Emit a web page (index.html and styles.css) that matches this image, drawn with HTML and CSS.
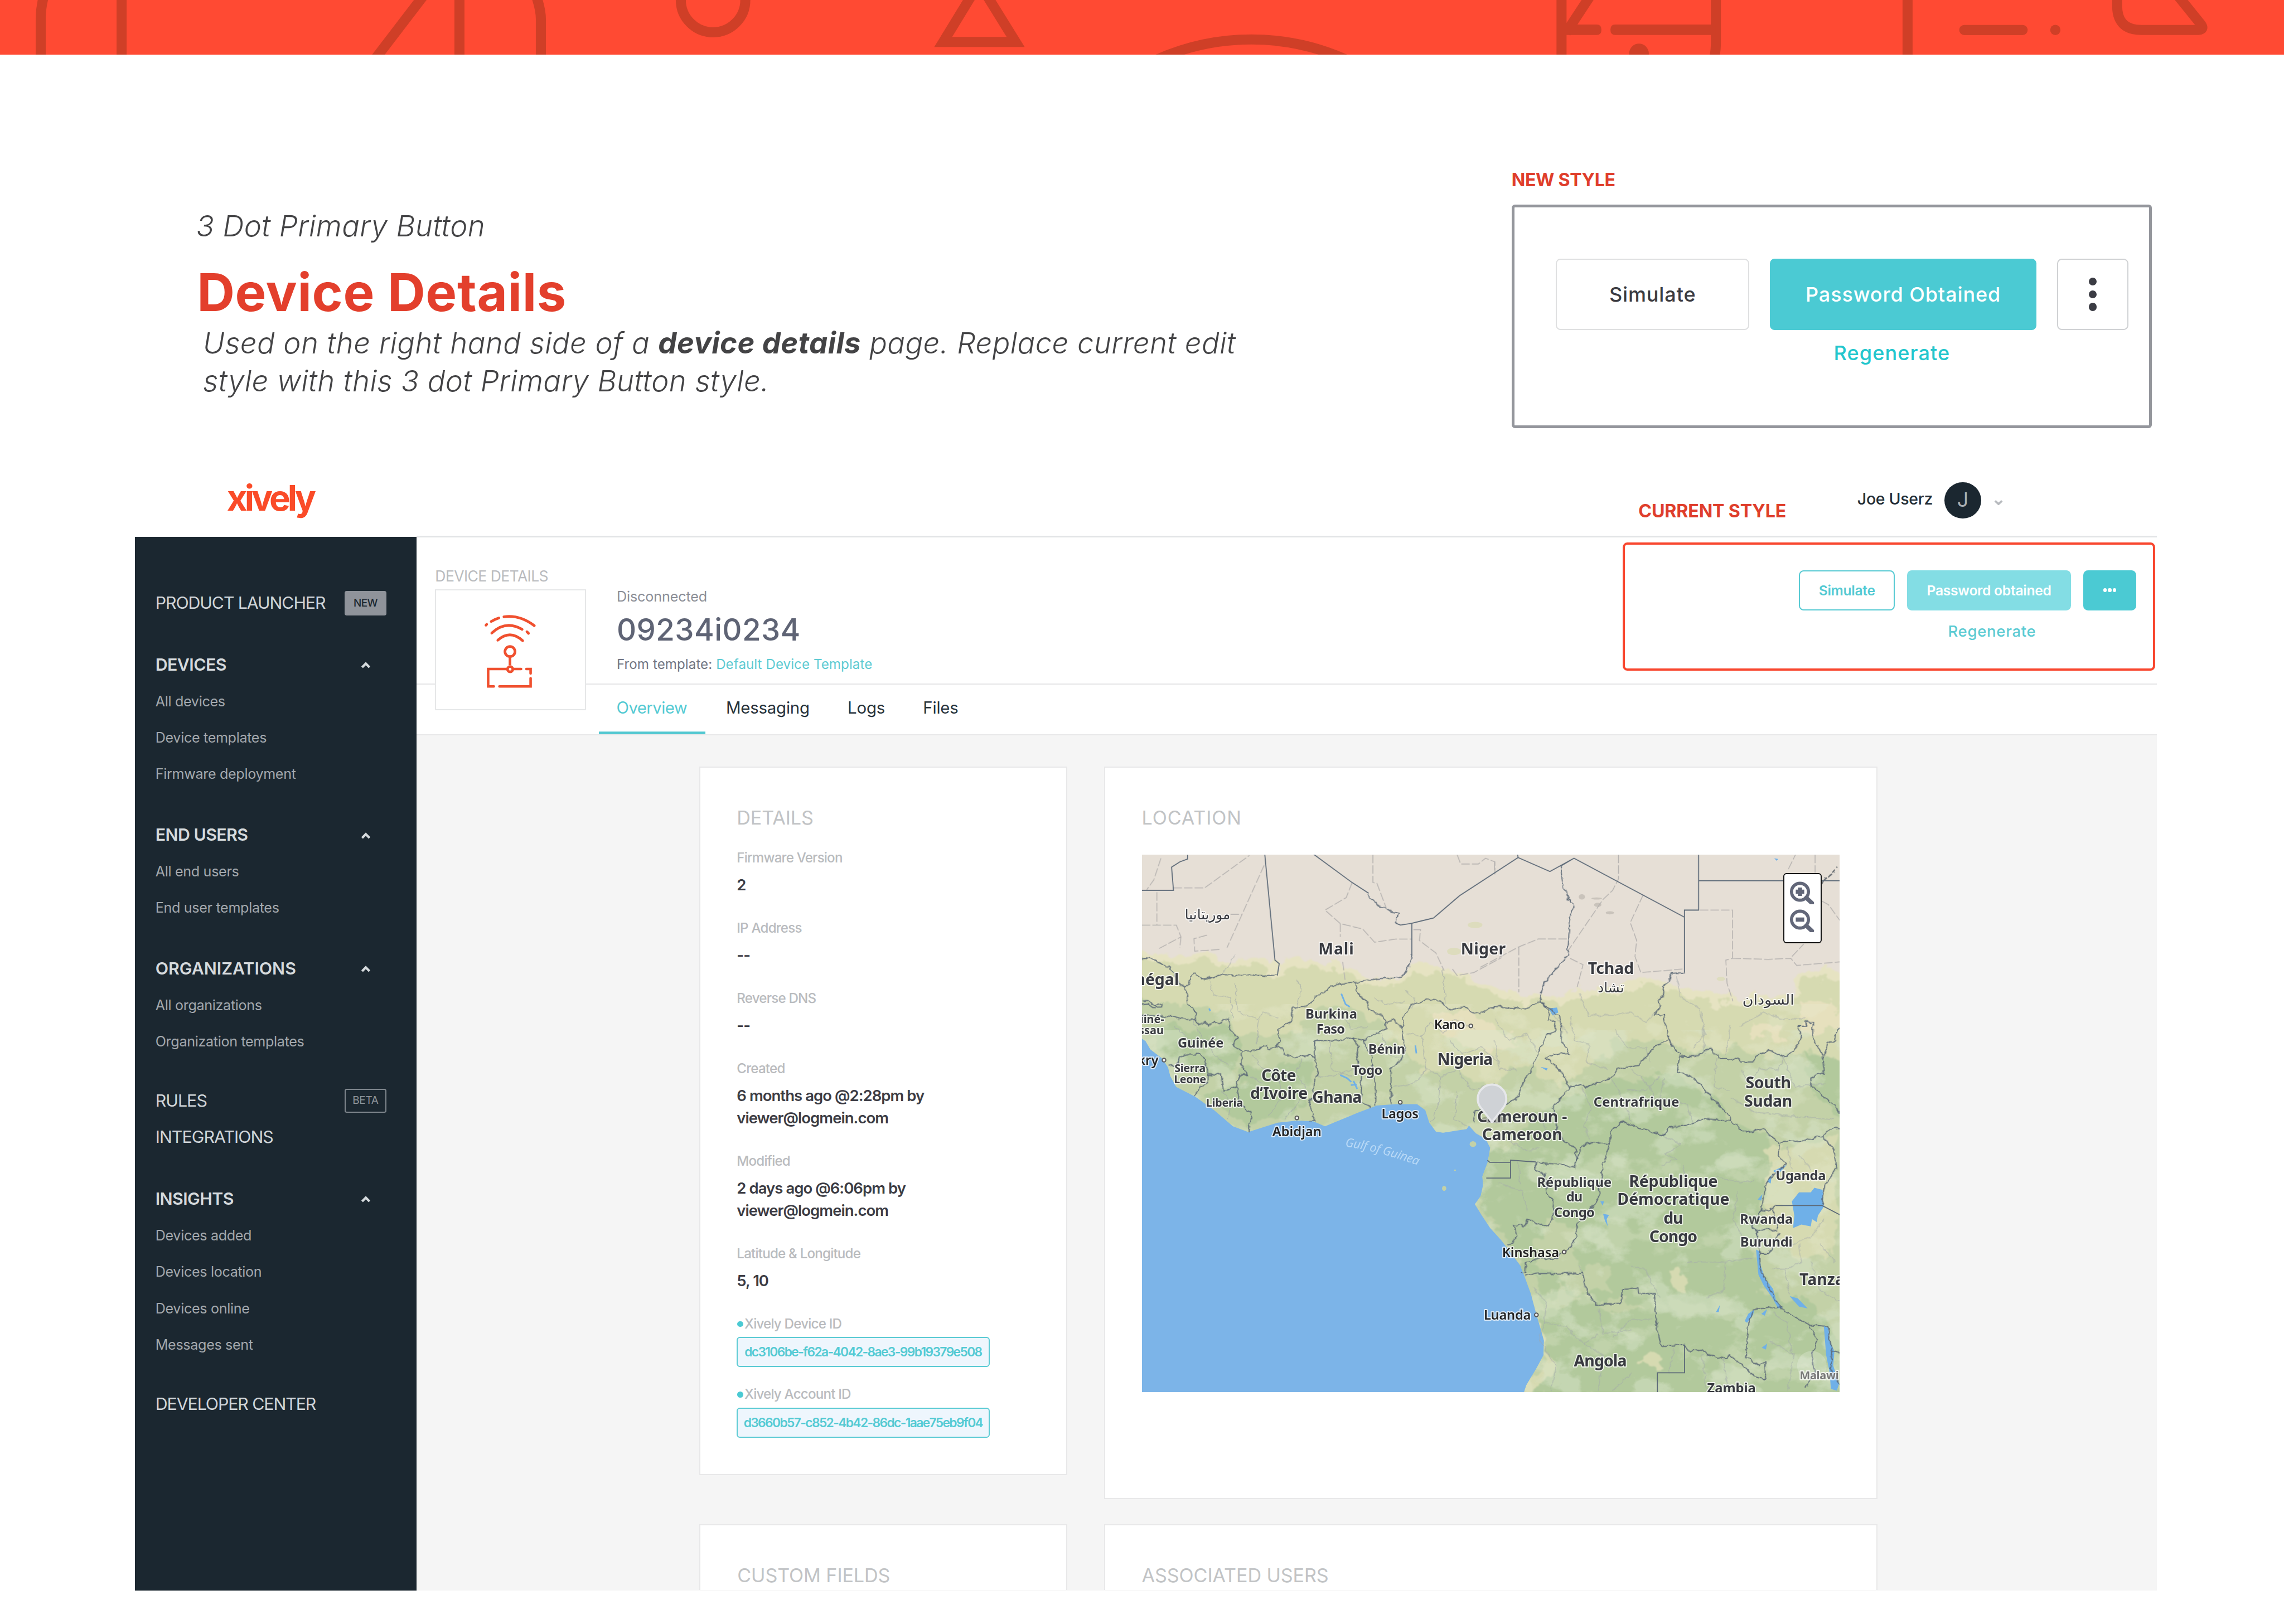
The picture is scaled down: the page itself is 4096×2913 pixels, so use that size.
FILE: index.html
```html
<!DOCTYPE html>
<html lang="en">
<head>
<meta charset="utf-8">
<title>3 Dot Primary Button – Device Details</title>
<link rel="stylesheet" href="styles.css">
</head>
<body>
<svg class="banner" viewBox="0 0 4320 103.3" preserveAspectRatio="none" aria-hidden="true">
  <g fill="none" stroke="#cf3f27" stroke-width="19">
    <path d="M82-4Q77 16 77 36V110M230-4V110M801-8L709 112M869-4V110M1014-8Q1023 18 1023 36V110"/>
    <circle cx="1348.7" cy="0" r="61"/>
    <path d="M1852-32L1784 79.3H1921Z"/>
    <path d="M2187 113A440 440 0 0 1 2547 113"/>
    <path d="M2953.5-4V110M3245.5-4V82Q3245 100 3242 110M3008-8L2962 62M3608-4V110M4004.5-4V14Q4006 56.5 4050 56.5H4158Q4170 56 4163 46L4121-6"/>
  </g>
  <g fill="#cf3f27">
    <path d="M2953 46.3H3020Q3029 46.3 3029 56.2T3020 66H2953ZM3245 46.3H3055Q3046 46.3 3046 56.2T3055 66H3245Z"/>
    <circle cx="3100" cy="101" r="18.6"/>
    <rect x="3705.7" y="47" width="129.5" height="19.3" rx="9.6"/>
    <circle cx="3887.5" cy="56.6" r="9.7"/>
  </g>
</svg>

<section class="intro">
  <div class="intro-copy">
    <p class="kicker">3 Dot Primary Button</p>
    <h1>Device Details</h1>
    <p class="lead">Used on the right hand side of a <b>device details</b> page. Replace current edit<br>style with this 3 dot Primary Button style.</p>
  </div>
  <div class="spec">
    <p class="tag">NEW STYLE</p>
    <div class="spec-box">
      <div class="spec-row">
        <button class="sbtn sbtn-plain">Simulate</button>
        <button class="sbtn sbtn-primary">Password Obtained</button>
        <button class="sbtn sbtn-dots" aria-label="More"><i></i><i></i><i></i></button>
      </div>
      <a class="spec-link">Regenerate</a>
    </div>
  </div>
</section>

<div class="app">
  <header class="topbar">
    <span class="logo">xively</span>
    <div class="user">
      <span class="user-name">Joe Userz</span>
      <span class="avatar">J</span>
      <svg class="user-caret" viewBox="0 0 17 11"><path d="M2 2.5L8.500 8.500L15 2.500"/></svg>
    </div>
  </header>

  <div class="body">
    <nav class="sidebar">
      <div class="group g-launch"><a class="top tight">PRODUCT LAUNCHER</a><span class="badge badge-new">NEW</span></div>
      <div class="group g-sec">
        <div class="head"><b>DEVICES</b><svg class="caret" viewBox="0 0 19 13"><path d="M2.500 10.500L9.500 3.500L16.500 10.500"/></svg></div>
        <a>All devices</a><a>Device templates</a><a>Firmware deployment</a>
      </div>
      <div class="group g-sub">
        <div class="head"><b>END USERS</b><svg class="caret" viewBox="0 0 19 13"><path d="M2.500 10.500L9.500 3.500L16.500 10.500"/></svg></div>
        <a>All end users</a><a>End user templates</a>
      </div>
      <div class="group g-sub">
        <div class="head"><b class="wide">ORGANIZATIONS</b><svg class="caret" viewBox="0 0 19 13"><path d="M2.500 10.500L9.500 3.500L16.500 10.500"/></svg></div>
        <a>All organizations</a><a>Organization templates</a>
      </div>
      <div class="group g-plain">
        <div class="line"><a class="top">RULES</a><span class="badge badge-beta">BETA</span></div>
        <a class="top">INTEGRATIONS</a>
      </div>
      <div class="group g-sec">
        <div class="head"><b>INSIGHTS</b><svg class="caret" viewBox="0 0 19 13"><path d="M2.500 10.500L9.500 3.500L16.500 10.500"/></svg></div>
        <a>Devices added</a><a>Devices location</a><a>Devices online</a><a>Messages sent</a>
      </div>
      <div class="group g-plain"><a class="top tight">DEVELOPER CENTER</a></div>
    </nav>

    <main>
      <section class="device">
        <div class="device-thumb">
          <p class="crumb">DEVICE DETAILS</p>
          <div class="thumb">
            <svg viewBox="0 0 180 190" class="thumb-icon">
              <g fill="none" stroke="#f0502f" stroke-width="5" stroke-linecap="round">
                <path d="M39.500 52L41 50.500M49.500 45Q56 41 64 38.500M73.500 36.200Q103 32 131 53"/>
                <path d="M50.500 67Q77 42 108 60M117 64.500L120 67.500"/>
                <path d="M62 80.500Q85 60 109 81.500"/>
                <circle cx="85" cy="102" r="9.500"/>
                <path d="M85 112V128" stroke-linecap="butt"/>
                <circle cx="85.300" cy="135.500" r="5"/>
                <path d="M54.500 168H43.700V135H79M91 135H106M116 135H124V143.500M124 152.500V168H65" stroke-width="4.800" />
              </g>
            </svg>
          </div>
        </div>
        <div class="device-info">
          <p class="status">Disconnected</p>
          <h2>09234i0234</h2>
          <p class="template">From template: <a>Default Device Template</a></p>
        </div>
        <div class="device-actions">
          <div class="action-row">
            <button class="btn btn-outline">Simulate</button>
            <button class="btn btn-muted">Password obtained</button>
            <button class="btn btn-more" aria-label="More"><i></i><i></i><i></i></button>
          </div>
          <a class="regen">Regenerate</a>
        </div>
      </section>

      <div class="tabs">
        <a class="tab active">Overview</a><a class="tab">Messaging</a><a class="tab">Logs</a><a class="tab">Files</a>
      </div>

      <div class="content">
        <div class="col">
          <section class="card card-details">
            <h3>DETAILS</h3>
            <dl>
              <dt>Firmware Version</dt><dd>2</dd>
              <dt>IP Address</dt><dd>--</dd>
              <dt>Reverse DNS</dt><dd>--</dd>
              <dt>Created</dt><dd>6 months ago @2:28pm by<br>viewer@logmein.com</dd>
              <dt>Modified</dt><dd>2 days ago @6:06pm by<br>viewer@logmein.com</dd>
              <dt>Latitude &amp; Longitude</dt><dd>5, 10</dd>
              <dt class="dot">Xively Device ID</dt><dd class="id">dc3106be-f62a-4042-8ae3-99b19379e508</dd>
              <dt class="dot">Xively Account ID</dt><dd class="id">d3660b57-c852-4b42-86dc-1aae75eb9f04</dd>
            </dl>
          </section>
          <section class="card card-next"><h3>CUSTOM FIELDS</h3></section>
        </div>
        <div class="col">
          <section class="card card-location">
            <h3 class="spaced">LOCATION</h3>
            <div class="map">
              <svg viewBox="2160 1617 1320 1017">
                <defs>
                  <clipPath id="land"><path transform="translate(2140 1590) scale(.44643 .67602)" d="M44 40H3002V1545H1663L1673 1525L1718 1475L1746 1440L1748 1400L1733 1365L1713 1320L1693 1270L1668 1225L1648 1190L1608 1155L1568 1120L1520 1085L1485 1050L1455 1018L1480 995L1490 965L1487 940L1510 900L1520 860L1500 835L1460 820L1430 798L1420 808L1320 818L1290 815L1262 790L1245 755L1210 738H1120L1040 742L960 762L820 800L770 786L700 784L620 790L495 816L430 800L350 755L270 717L190 690L165 660L155 635L130 610L80 585L60 562L44 555Z"/></clipPath>
                  <filter id="soft" x="-5%" y="-5%" width="110%" height="110%">
                    <feTurbulence type="fractalNoise" baseFrequency=".03" numOctaves="4" seed="4" result="n"/>
                    <feDisplacementMap in="SourceGraphic" in2="n" scale="46" xChannelSelector="R" yChannelSelector="G"/>
                    <feGaussianBlur stdDeviation="1.200"/>
                  </filter>
                  <filter id="patchLight" x="0" y="0" width="100%" height="100%">
                    <feTurbulence type="fractalNoise" baseFrequency=".012 .016" numOctaves="5" seed="11"/>
                    <feColorMatrix values="0 0 0 0 .84  0 0 0 0 .86  0 0 0 0 .69  9 0 0 0 -5.200"/>
                  </filter>
                  <filter id="patchDark" x="0" y="0" width="100%" height="100%">
                    <feTurbulence type="fractalNoise" baseFrequency=".012 .016" numOctaves="5" seed="23"/>
                    <feColorMatrix values="0 0 0 0 .71  0 0 0 0 .79  0 0 0 0 .61  0 9 0 0 -4.800"/>
                  </filter>
                  <filter id="rough" x="-2%" y="-2%" width="104%" height="104%">
                    <feTurbulence type="fractalNoise" baseFrequency=".09" numOctaves="2" seed="7" result="n"/>
                    <feDisplacementMap in="SourceGraphic" in2="n" scale="9" xChannelSelector="R" yChannelSelector="G"/>
                  </filter>
                </defs>
                <rect x="2160" y="1617" width="1320" height="1017" fill="#7cb4e8"/>
                <g clip-path="url(#land)">
                  <rect x="2160" y="1617" width="1320" height="1017" fill="#c3d1a7"/>
                  <g filter="url(#soft)">
                    <g transform="translate(2140 1590) scale(.44643 .67602)">
                      <path fill="#d6dab1" d="M-60-40H3100V640L2900 590L2700 600L2500 585L2350 600L2250 560L2050 560L1950 640L1800 690L1700 640L1600 640L1500 700L1380 640L1250 650L1100 560L1000 480L800 470L640 545L460 540L400 480L250 470L-60 420Z"/>
                      <path fill="#b2c99c" d="M100 520L250 530L450 520L460 640L380 660L250 650L120 600Z"/>
                      <path fill="#b2c99c" d="M480 640L760 610L780 700L700 770L560 760L500 800L380 760L300 700L460 690Z"/>
                      <path fill="#b2c99c" d="M1700 760L1860 720L2000 680L2280 650L2420 690L2540 780L2700 830L2720 880L2660 1050L2640 1140L2700 1290L2650 1370L2600 1440L2500 1440L2350 1400L2240 1340L2100 1290L1940 1300L1800 1240L1760 1310L1740 1240L1660 1200L1560 1100L1470 1020L1480 900L1520 860L1600 880Z"/>
                      <path fill="#b2c99c" d="M1740 1320L1900 1290L2080 1320L2220 1320L2260 1440L2340 1520L2500 1560H1680L1740 1500Z"/>
                      <path fill="#b2c99c" d="M2200 1280L2640 1250L2760 1280L2900 1300L3020 1400V1600H2200ZM2860 590L3020 620V780L2900 720Z"/>
                      <path fill="#c3d1a7" d="M1760 1050L1860 1070L1900 1200L2000 1180L2040 1270L1900 1280L1780 1210L1700 1180Z"/>
                      <path fill="#d6dab1" d="M2700 860L2900 840L2990 820V1100L2960 1180L2800 1170L2700 1060ZM2180 1430L2240 1430L2230 1480L2150 1460Z"/>
                      <path fill="#d6dab1" d="M2260 1200L2330 1200L2340 1250L2290 1250ZM1700 1210L1720 1320L1790 1500L1700 1540L1660 1540L1740 1460Z"/>
                      <path fill="#e6e0bd" d="M1290 490L1440 470L1560 540L1640 560L1500 590L1350 560ZM2640 520L2780 520L2760 560L2620 545ZM2840 440L2980 460L3000 520L2860 540Z"/>
                    </g>
                  </g>
                  <rect x="2160" y="1900" width="1320" height="734" filter="url(#patchLight)" opacity=".24"/>
                  <rect x="2160" y="1950" width="1320" height="684" filter="url(#patchDark)" opacity=".45"/>
                  <g filter="url(#soft)">
                    <path fill="#e6e3c2" transform="translate(2140 1590) scale(.44643 .67602)" d="M-60-60H3100V375L2928 385L2828 410L2778 450L2628 460L2478 460L2348 435L2238 405L2078 420L1878 445L1728 450L1598 445L1478 418L1300 375L1200 365L1130 405L1000 405L900 370L750 355L600 365L400 345L230 338L150 340L-60 320Z"/>
                    <path fill="#e6dfd6" transform="translate(2140 1590) scale(.44643 .67602)" d="M-60-60H3100V355L2928 365L2828 390L2778 430L2628 440L2478 440L2348 415L2238 385L2078 400L1878 425L1728 430L1598 425L1478 398L1300 355L1200 345L1130 385L1000 385L900 350L750 335L600 345L400 325L230 318L150 320L-60 300Z"/>
                  </g>
                  <g fill="#dcdcb8" opacity=".8"><ellipse cx="2750" cy="1800" rx="13" ry="7"/><ellipse cx="2790" cy="1750" rx="14" ry="6"/><ellipse cx="3255" cy="1852" rx="8" ry="4"/></g>
                  <g fill="#c9c3bb"><ellipse cx="2992" cy="1697" rx="6" ry="5"/><ellipse cx="3022" cy="1712" rx="7" ry="4"/><ellipse cx="3045" cy="1727" rx="8" ry="3"/><ellipse cx="3020" cy="1700" rx="10" ry="2"/></g>
                </g>
                <g transform="translate(2140 1590) scale(.44643 .67602)" fill="#c3d1a7">
                  <ellipse cx="1447" cy="850" rx="14" ry="8"/><ellipse cx="1325" cy="974" rx="9" ry="7"/><ellipse cx="1371" cy="923" rx="4" ry="2"/>
                </g>
                <g fill="#6fb0e8" stroke="none" transform="translate(2800 1590) scale(.44643 .67602)">
                  <path d="M1320 1010L1350 985L1400 985L1415 972L1450 978L1455 1025L1430 1050L1425 1068L1405 1060L1400 1080L1360 1075L1325 1085L1330 1050Z"/>
                  <path d="M1455 1358L1475 1365L1480 1400L1500 1430L1495 1470L1520 1520L1510 1540L1485 1535L1480 1490L1465 1440Z"/>
                  <path d="M1310 1275L1345 1282L1387 1310L1350 1305ZM1168 1145L1182 1150L1188 1190L1205 1225L1240 1255L1252 1285L1280 1308L1262 1310L1235 1278L1200 1245L1178 1215Z"/>
                  <path d="M1120 1345L1135 1325L1162 1312L1155 1328L1130 1350ZM1190 1325L1215 1312L1205 1330ZM1192 1420L1215 1408L1210 1425ZM290 470L325 468L330 482L305 490ZM520 1045L545 1048L535 1060L540 1080L528 1065ZM1175 1005L1195 990L1190 1008ZM1215 955L1235 935L1230 960ZM998 1320L1015 1300L1010 1320ZM1240 925L1298 908L1260 935ZM508 1010L524 1010L518 1022ZM255 634L285 638L280 644ZM1245 50L1262 52L1255 57Z"/>
                </g>
                <path fill="none" stroke="#6fb0e8" stroke-width="3" d="M2537 1880L2545 1900L2553 1905M2560 2045L2567 2060M2555 2053L2566 2052M2677 1978L2679 1993M2287 1908L2289 1913M2535 2034L2548 2040L2556 2047"/>

                <g filter="url(#rough)" fill="none" stroke="#a3a9ab" stroke-width="1.300" opacity=".7">
                  <g transform="translate(2140 1590) scale(.44643 .67602)">
                    <path vector-effect="non-scaling-stroke" d="M330 380L345 430L420 440L430 500M440 400L450 480L530 500L560 480L620 500M540 500L530 570M700 390L720 420L700 465M800 480L900 490L930 530L1000 520M840 560L850 640L930 660M780 660L850 660L950 640M800 720L940 710M510 600L560 640L620 650L640 720L580 770M500 660L560 680M640 640L690 650L740 690L700 740L650 780M700 650L720 610M180 520L250 560L330 560L350 600L410 630M260 500L300 560M380 700L420 730L410 780M1160 420L1200 440L1190 470M1320 360L1330 460M1170 540L1230 550L1260 510L1320 540L1370 500L1460 530M1230 550L1250 640L1200 680L1110 690M1250 640L1310 660L1380 640L1440 700L1540 680M1310 660L1300 740L1270 790M1380 700L1370 780L1420 800M1350 560L1400 600L1480 580L1560 620M1060 540L1090 600L1140 610M440 320L380 380M1030 440L1080 460L1160 450"/>
                  </g>
                  <g transform="translate(2800 1590) scale(.44643 .67602)">
                    <path vector-effect="non-scaling-stroke" d="M60 500L120 560L200 540L240 590M60 560L80 640L150 640M380 490L400 560L460 570L450 620L540 640M370 540L300 480M420 430L460 490L560 490L640 480L700 510L740 480M570 530L620 580L700 580L720 620M640 640L720 690L760 760M560 670L600 720L640 790M430 690L470 750L440 800L460 840M620 700L700 700L760 660M780 660L760 720L880 740L900 790M180 760L250 780L300 830M100 830L200 870L250 860M80 960L180 980L200 1040M160 900L170 960M780 830L850 850L780 880L830 890L770 910M860 910L880 980L960 1000M950 980L1000 940L1100 960L1160 950M1090 980L1070 1060L1110 1110M640 1190L700 1200L760 1280M880 1180L1040 1180L1150 1170M1040 1180L1030 1260L960 1280M420 1190L440 1250M220 1250L280 1290L270 1350L360 1360L440 1410L500 1380M270 1350L250 1400L320 1470L300 1540M440 1410L520 1440L500 1540M500 1310L520 1380L640 1370M560 1390L640 1340L730 1340M640 1490L560 1540M830 380L850 440L930 470L950 540L900 580M940 480L950 600M1060 520L1040 600M1100 520L1200 480L1280 500L1380 500M1000 610L990 690L1060 700M1100 640L1140 680L1180 640L1260 640L1300 600M1060 720L1160 760L1300 770L1500 780M1280 600L1330 690L1460 680M1350 880L1400 920M1300 860L1320 920M1460 1060L1400 1110L1320 1130M1350 1130L1360 1180L1300 1200L1230 1200M1290 1200L1310 1270M1400 1180L1440 1260L1524 1290M1440 1130L1500 1180M940 1440L960 1545M1030 1450L1050 1545M1220 1400L1330 1440L1300 1540M1240 1320L1300 1350L1320 1440M820 1420L800 1490"/>
                  </g>
                </g>
                <g fill="none" stroke="#b5b2b0" stroke-width="1.600" stroke-dasharray="16 4">
                  <g transform="translate(2140 1590) scale(.44643 .67602)">
                    <path vector-effect="non-scaling-stroke" d="M125 50L95 110L65 138M178 133L310 133L500 42M108 145V237M44 237H190L210 270L110 305M562 70L470 205L405 300M420 207H470M210 270L205 300M320 265L265 275L268 310L380 305M1023 40V118L1040 120L1080 190M935 118L910 160L820 195L885 233L980 248L1030 285L1120 276H1188M885 233V270M895 340L905 390M1195 250H1225L1220 280L1290 315L1325 365M1380 40L1395 66H1470L1500 50L1540 60V95M1360 360L1380 378L1450 370L1568 328"/>
                  </g>
                  <g transform="translate(2800 1590) scale(.44643 .67602)">
                    <path vector-effect="non-scaling-stroke" d="M60 60V90M0 355L163 298L245 276H370M163 298V425M585 40V108L560 140L520 165L370 310M690 152L635 230L662 280L655 325L680 370L860 360M380 330L435 348L410 410M930 195H1068V330L1040 335L1045 400L1070 450M1068 330L1220 333L1315 330L1340 350L1524 340M1320 325L1370 290M1447 170L1475 180L1524 225M1418 40V90M1305 80L1335 40"/>
                  </g>
                </g>
                <path fill="none" stroke="#6d7276" stroke-width="2.500" stroke-dasharray="7 5" d="M3446 1672L3452 1660M3450 1665L3470 1650M3458 1660L3475 1640"/>

                <g filter="url(#rough)" fill="none" stroke="#5d6a78" stroke-width="1.900">
                  <g transform="translate(2140 1590) scale(.44643 .67602)">
                    <path vector-effect="non-scaling-stroke" d="M618 378H395L385 375L300 390L268 374L250 378L243 405L225 408L235 430L240 460L270 475L272 505M44 332Q90 325 130 350L160 355L190 385L205 405L225 408M44 450L70 448L95 462L130 458L128 468L90 468L70 458L44 460M44 490L170 492L205 500L272 500L285 515L310 508L322 520L350 508L375 513L395 498L412 500L420 530L450 555L432 572L468 588M160 632L190 630L205 608Q215 597 290 597L310 615L325 655L380 655L390 700L445 690L460 655H490L465 625V590M325 655V680L290 690L270 715M445 690L455 715L450 740L480 742L485 760L508 760L498 815M468 588L520 590L545 580L575 573L578 585L612 580L640 583L650 600L695 608L760 600L778 610M612 580L630 560L622 530L680 505V470L745 465L775 440L870 402L950 398L1015 390L1150 380L1180 350L1188 320M1120 232L1130 205L1080 190L1050 182L1008 160L1005 148M950 398L955 425L1005 460V475L1060 490L1080 508L1078 530L1005 550L990 560L930 553L870 560H775L778 610L790 650L770 680L768 705L755 740L778 785H755M935 553L960 575L955 600L965 640L975 680L972 730L1010 745M985 560L1000 590L1018 600L1020 650L1035 680L1033 742M1080 508L1110 502L1148 525L1150 560L1162 580L1140 615L1100 635V738M1148 525L1152 495L1185 460L1260 445L1310 450L1345 475L1410 465L1450 480L1478 485L1538 465L1668 472L1733 450"/>
                  </g>
                  <g transform="translate(2800 1590) scale(.44643 .67602)">
                    <path vector-effect="non-scaling-stroke" d="M340 72L350 130L375 155L372 165L397 182L380 215L370 322L270 400L250 430L260 452L290 475V500L318 510L315 535L280 545L245 595L210 650L185 670L160 715L130 732L70 740L30 750L-20 755L-30 790M865 370L805 372L800 395L770 410L780 435L755 445L760 465L740 487L775 490L785 520L800 560L845 600L835 645L900 665L940 690L1010 740L1058 770L1055 785M260 452L330 490L345 530L342 560L378 597L310 598L280 608L360 660L375 692L430 683L445 690L560 665L580 640L670 628L740 575L800 560M375 692L305 750L325 800L320 820L405 865L403 915L340 908L235 900M403 900L432 852L500 845L548 848L550 820L600 785L665 805L780 825L795 805L880 795L940 780L1055 785M548 848L520 905L500 1000L440 1060L410 1070L408 1110L380 1140L345 1155L325 1170L240 1172L195 1180L193 1208H175M235 900L230 920L275 935L280 985L310 1010L305 1060L285 1080L200 1060L190 1078H140L155 1105L140 1125L115 1135M845 605L920 603L975 580L1010 610L1090 612L1105 620H1155L1165 605L1220 587L1290 606L1330 590L1360 550L1345 520H1378L1380 508H1410L1408 555L1450 600L1455 650L1405 660L1395 680L1460 720L1505 745L1530 770M1455 610L1470 570L1500 560L1510 530L1530 520M1055 785L1130 818L1195 808L1265 845L1380 840L1450 825L1480 808L1530 805M1265 845L1262 885L1295 905L1225 945L1205 970L1192 1035L1150 1080L1170 1095L1185 1160V1200L1240 1275L1275 1312L1390 1355L1470 1360L1490 1430L1530 1435M1450 825L1500 870L1510 915L1460 965L1448 1022M1240 1030L1250 1060L1260 1095L1215 1085L1170 1092M1250 1022L1220 1037L1192 1035M1265 1100L1235 1140L1215 1155H1185M187 1218L235 1212H430L445 1250L487 1298L595 1295L605 1255L668 1252L670 1268H738L745 1350L765 1415L865 1412L885 1430L940 1425L960 1440L1040 1450L1055 1440L1120 1475L1160 1500L1205 1508L1208 1460L1180 1470L1125 1445L1135 1350L1160 1312L1275 1305M1390 1355L1430 1395L1405 1440L1415 1490L1380 1530M1490 1430L1485 1480L1530 1525"/>
                  </g>
                </g>
                <g fill="none" stroke="#5d6a78" stroke-width="1.900">
                  <g transform="translate(2140 1590) scale(.44643 .67602)">
                    <path vector-effect="non-scaling-stroke" d="M238 40V52L205 60L170 75L178 140H44M565 40L608 335L626 345L618 378M1188 322V232L1140 237L1120 232M1005 148L935 118L770 38M1188 232L1280 217L1390 155L1478 117L1638 48L1773 87L1875 50L2343 215M2403 40V195H2343V370M2403 113H3002M1636 38L1638 48M1875 50L1818 72"/>
                  </g>
                  <g transform="translate(2800 1590) scale(.44643 .67602)">
                    <path vector-effect="non-scaling-stroke" d="M235 900L128 895V945H25M30 895L40 901H128M1250 1022H1448L1530 1050M865 1412V1490H750V1550"/>
                  </g>
                </g>
                <circle cx="3427" cy="2584" r="28" fill="#fff" opacity=".22"/>

                <g class="city-dots">
                  <circle cx="2201.600" cy="2005.700" r="3.500"/><circle cx="2782" cy="1941" r="3.500"/><circle cx="2648.500" cy="2085.500" r="3.500"/><circle cx="2453" cy="2115" r="3.500"/><circle cx="2958.500" cy="2368.800" r="3.500"/><circle cx="2906" cy="2487.700" r="3.500"/>
                </g>
                <g class="labels">
                  <g class="l30">
                    <text x="2527" y="1806" textLength="67">Mali</text>
                    <text x="2805.500" y="1806" textLength="85">Niger</text>
                    <text x="2230" y="1864" class="end">Sénégal</text>
                    <text x="2418.600" y="2045" textLength="66">Côte</text>
                    <text x="2419" y="2079" textLength="109">d’Ivoire</text>
                    <text x="2529" y="2086" textLength="94">Ghana</text>
                    <text x="2771" y="2014.500" textLength="105">Nigeria</text>
                    <text x="3047" y="1843" textLength="87">Tchad</text>
                    <text x="3344.600" y="2059" textLength="86">South</text>
                    <text x="3344.600" y="2093.600" textLength="91">Sudan</text>
                    <text x="2879" y="2123" textLength="170">Cameroun -</text>
                    <text x="2879" y="2157" textLength="152">Cameroon</text>
                    <text x="3165" y="2245.700" textLength="168">République</text>
                    <text x="3165" y="2279.500" textLength="212">Démocratique</text>
                    <text x="3165" y="2315" textLength="37">du</text>
                    <text x="3165" y="2350" textLength="91">Congo</text>
                    <text x="3027" y="2585" textLength="100">Angola</text>
                    <text x="3403.600" y="2431" class="start">Tanzania</text>
                  </g>
                  <g class="l25">
                    <text x="2518" y="1927" textLength="98">Burkina</text>
                    <text x="2517" y="1956" textLength="54">Faso</text>
                    <text x="2271" y="1982" textLength="87">Guinée</text>
                    <text x="2586" y="2033.500" textLength="58">Togo</text>
                    <text x="2623" y="1993.600" textLength="70">Bénin</text>
                    <text x="3095" y="2093.600" textLength="162">Centrafrique</text>
                    <text x="2977.800" y="2245.700" textLength="141">République</text>
                    <text x="2977.800" y="2273.500" textLength="31">du</text>
                    <text x="2977.800" y="2302.500" textLength="77">Congo</text>
                    <text x="3406" y="2233" textLength="95">Uganda</text>
                    <text x="3341" y="2314.700" textLength="100">Rwanda</text>
                    <text x="3341" y="2358" textLength="99">Burundi</text>
                    <text x="3275" y="2635" textLength="92">Zambia</text>
                  </g>
                  <g class="l25 city">
                    <text x="2191" y="2014.500" class="end">Conakry</text>
                    <text x="2741.800" y="1947.600" textLength="59">Kano</text>
                    <text x="2648" y="2116" textLength="70">Lagos</text>
                    <text x="2453" y="2149.700" textLength="93">Abidjan</text>
                    <text x="2895" y="2378" textLength="108">Kinshasa</text>
                    <text x="2851" y="2497" textLength="89">Luanda</text>
                  </g>
                  <g class="l20">
                    <text x="2202" y="1936" class="end">Guiné-</text>
                    <text x="2201" y="1957" class="end">Bissau</text>
                    <text x="2251" y="2028" textLength="59">Sierra</text>
                    <text x="2251" y="2049" textLength="61">Leone</text>
                    <text x="2316" y="2094" textLength="70">Liberia</text>
                    <text x="3441" y="2609" textLength="74" class="faded">Malawi</text>
                  </g>
                  <g class="arabic">
                    <text x="2284" y="1739" textLength="86" lengthAdjust="spacingAndGlyphs">موريتانيا</text>
                    <text x="3047" y="1877" textLength="50" lengthAdjust="spacingAndGlyphs">تشاد</text>
                    <text x="3344.600" y="1901" textLength="98" lengthAdjust="spacingAndGlyphs">السودان</text>
                  </g>
                </g>
                <path id="gulf" fill="none" d="M2544 2169Q2610 2178 2690 2208"/>
                <text class="gulf"><textPath href="#gulf" textLength="143">Gulf of Guinea</textPath></text>

                <ellipse cx="2826" cy="2118" rx="24" ry="7" fill="#555" opacity=".35"/>
                <path d="M2822 2123L2801 2096A27 27 0 1 1 2843 2096Z" fill="#cfd2d6" stroke="#e6e7ea" stroke-width="4" stroke-linejoin="round"/>
              </svg>
              <div class="zoomer">
                <svg viewBox="0 0 46 43"><circle cx="19" cy="19.500" r="16"/><path d="M31 31L41.500 41" class="handle"/><path d="M11 19.500H27M19 11.500V27.500" class="sign"/></svg>
                <svg viewBox="0 0 46 43"><circle cx="19" cy="19.500" r="16"/><path d="M31 31L41.500 41" class="handle"/><path d="M11 19.500H27" class="sign"/></svg>
              </div>
            </div>
          </section>
          <section class="card card-next"><h3>ASSOCIATED USERS</h3></section>
        </div>
      </div>
    </main>
  </div>
  <p class="tag current-tag">CURRENT STYLE</p>
  <div class="current-box"></div>
</div>
</body>
</html>
```
FILE: styles.css
```css
* { box-sizing: border-box; margin: 0; padding: 0; }

html { overflow: hidden; background: #fff; }

body {
  width: 4320px;
  height: 3072px;
  zoom: 0.948148;
  overflow: hidden;
  background: #fff;
  color: #3c3c44;
  font-family: Inter, "Liberation Sans", sans-serif;
}

button { font: inherit; border: 0; background: none; }
svg { display: block; }

.banner { width: 100%; height: 103.5px; background: #ff4a33; }

/* Intro */
.intro { display: flex; height: 776.5px; }
.intro-copy { width: 2859px; padding: 288.5px 0 0 371px; }
.kicker, .lead { font: italic 300 55.5px/72px Inter, sans-serif; letter-spacing: 0.45px; color: #434345; }
.kicker { height: 70px; line-height: 70px; }
h1 {
  margin-top: 31.5px;
  padding-left: 1.5px;
  font-size: 99px;
  line-height: 120px;
  font-weight: 700;
  letter-spacing: 0.7px;
  color: #e33f2c;
}
.lead { margin-top: -1px; padding-left: 13px; white-space: nowrap; }
.lead b { font-weight: 700; }

.spec { padding-top: 217.5px; }
.tag { font-size: 34px; line-height: 40px; font-weight: 700; letter-spacing: -0.4px; color: #df3e2c; }
.spec-box {
  width: 1211.5px;
  height: 423px;
  margin-top: 26.5px;
  padding: 96.5px 0 0 78.5px;
  border: 5.5px solid #94969c;
  border-radius: 6px;
}
.spec-row { display: flex; gap: 39px; }
.sbtn { height: 135px; border-radius: 9px; font-size: 38px; font-weight: 500; letter-spacing: 0.92px; }
.sbtn-plain { width: 366px; border: 3px solid #dfe0e1; color: #3b3b40; }
.sbtn-primary { width: 504px; background: #4bcad3; color: #fff; }
.sbtn-dots {
  width: 135px;
  border: 3px solid #d0d2d4;
  display: flex;
  flex-direction: column;
  align-items: center;
  justify-content: center;
  gap: 8.700px;
}
.sbtn-dots i { width: 15.500px; height: 15.500px; border-radius: 50%; background: #3b3c44; }
.spec-link {
  display: block;
  margin-top: 19px;
  padding-left: 525.500px;
  font-size: 38px;
  line-height: 50px;
  font-weight: 500;
  letter-spacing: 1.2px;
  color: #23c6cd;
}

/* Application */
.app { position: relative; width: 3825px; margin-left: 255px; }

.topbar { display: flex; justify-content: space-between; height: 136px; padding-left: 174px; }
.logo { font-size: 67px; line-height: 125px; font-weight: 700; letter-spacing: -5.200px; color: #fa4b28; }
.user { display: flex; align-items: center; height: 133.600px; margin-right: 291.500px; }
.user-name { margin: 0 22.500px 6px 0; font-size: 30px; font-weight: 500; letter-spacing: -0.3px; color: #222d36; }
.avatar {
  width: 69px;
  height: 69px;
  border-radius: 50%;
  background: #1b2730;
  color: #a9aeb3;
  font-size: 38px;
  line-height: 67px;
  font-weight: 400;
  text-align: center;
}
.user-caret { width: 17px; height: 11px; margin: 7px 0 0 24.400px; fill: none; stroke: #b7babe; stroke-width: 4; }

.body { display: flex; height: 1993px; }

/* Sidebar */
.sidebar { width: 532.500px; padding: 90.500px 57px 0 39px; background: #1b2730; color: #d5dadd; }
.group { display: flex; flex-direction: column; }
.g-launch, .line { display: flex; flex-direction: row; align-items: center; justify-content: space-between; }
.g-sec { margin-top: 46.200px; }
.g-sub { margin-top: 44px; }
.g-plain { margin-top: 42.500px; }
.head { display: flex; align-items: center; justify-content: space-between; height: 71px; padding-right: 29px; }
.head b { font-size: 32px; font-weight: 600; letter-spacing: -0.600px; }
.head b.wide { letter-spacing: 0; }
.caret { width: 19px; height: 13px; margin-top: 3px; fill: none; stroke: #d5dadd; stroke-width: 4.500; }
.sidebar a { display: block; height: 69px; font-size: 26.500px; line-height: 69px; letter-spacing: -0.340px; color: #a3a8ad; }
.sidebar a.top { font-size: 32px; letter-spacing: -1px; color: #d0d5d9; }
.sidebar a.tight { letter-spacing: -1.150px; }
.badge { width: 78.500px; height: 46px; border-radius: 4px; font-size: 20px; line-height: 46px; text-align: center; }
.badge-new { background: #8f939a; color: #1b2730; font-weight: 500; letter-spacing: -0.700px; }
.badge-beta { border: 2.500px solid #7f868d; line-height: 41px; color: #8f959b; letter-spacing: -0.300px; }

/* Device header */
main { width: 3292.500px; margin-top: -2.700px; border-top: 3.200px solid #e2e4e6; }
.device { display: flex; height: 278.500px; padding-left: 35.500px; border-bottom: 2.500px solid #e5e6e7; }
.device-thumb { width: 286px; padding-top: 58px; }
.crumb { font-size: 28px; line-height: 30px; letter-spacing: -0.600px; color: #b9bbbe; white-space: nowrap; }
.thumb { position: relative; z-index: 1; width: 286px; height: 229px; margin-top: 10.500px; border: 2.500px solid #e6e7e8; background: #fff; }
.thumb-icon { width: 180px; height: 190px; margin: 13.500px 0 0 55px; }
.device-info { flex: 1; padding: 97px 0 0 57.500px; }
.status { font-size: 26.500px; line-height: 30px; letter-spacing: -0.120px; color: #8b8e96; }
h2 { margin-top: 16px; font-size: 57.500px; line-height: 64px; font-weight: 500; letter-spacing: 0.450px; color: #5f6475; }
.template { margin-top: 18.500px; font-size: 25.500px; line-height: 30px; letter-spacing: 0.060px; color: #727684; }
.template a { color: #5ecbd3; }

.device-actions { width: 638.500px; margin-right: 39px; padding-top: 62px; }
.action-row { display: flex; gap: 23px; }
.btn { height: 76px; border-radius: 9px; font-size: 26px; font-weight: 600; letter-spacing: -0.300px; }
.btn-outline { width: 182px; border: 2.700px solid #58cad3; color: #54cad3; }
.btn-muted { width: 310px; background: #83dde4; color: #fff; }
.btn-more { width: 101px; background: #4bcad3; display: flex; align-items: center; justify-content: center; gap: 2.500px; }
.btn-more i { width: 6.700px; height: 6.700px; border-radius: 50%; background: #fff; }
.regen { display: block; margin-top: 22.500px; padding-left: 282px; font-size: 29px; line-height: 34px; font-weight: 500; letter-spacing: 0.770px; color: #5ccbd3; }

.tabs { display: flex; gap: 5px; height: 96px; padding-left: 345px; border-bottom: 2.500px solid #e8e8e9; }
.tab { height: 94px; padding: 0 33.500px; font-size: 31px; line-height: 88px; letter-spacing: -0.200px; color: #26313a; }
.tab.active { padding-right: 35px; letter-spacing: -0.600px; color: #54cad3; box-shadow: inset 0 -5px #54c8d1; }

/* Cards */
.content {
  display: grid;
  grid-template-columns: 695.500px 1463px;
  column-gap: 69.500px;
  height: 1618.500px;
  padding: 59px 0 0 535.500px;
  background: #f5f5f5;
}
.card { padding: 70px 0 0 69.500px; border: 3px solid #e8e8e9; background: #fff; }
.card h3 { font-size: 36px; line-height: 50px; font-weight: 400; letter-spacing: -0.100px; color: #c1c3c5; }
.card h3.spaced { letter-spacing: 0.900px; }
.card-details { height: 1341px; margin-bottom: 92.500px; }
.card-details { padding-left: 68.500px; }
.card-location { height: 1386px; margin-bottom: 47.500px; }
.card-next { height: 125px; border-bottom: 0; }

dt { height: 36px; margin-top: 42px; font-size: 25.500px; line-height: 36px; font-weight: 500; letter-spacing: -0.850px; color: #b9bbbe; }
dt:first-child { margin-top: 33px; }
dd { margin-top: 13px; font-size: 29px; line-height: 42px; font-weight: 600; letter-spacing: -1px; }
dt.dot::before { content: ""; display: inline-block; width: 11px; height: 11px; margin: 0 2.500px 3px 1px; border-radius: 50%; background: #4bcad3; }
dd.id {
  width: 478px;
  height: 57px;
  margin-top: 6.500px;
  border: 2.700px solid #5bcbd4;
  border-radius: 6px;
  background: #eef6fd;
  font-size: 24px;
  line-height: 52px;
  letter-spacing: -1.680px;
  text-align: center;
  color: #54cad3;
}
dd.id + dt { margin-top: 34px; }

/* Map */
.map { position: relative; width: 1320px; height: 1017px; margin-top: 44.500px; overflow: hidden; }
.map > svg { width: 1320px; height: 1017px; }
.labels text { font-family: "Noto Sans", sans-serif; font-weight: 700; text-anchor: middle; fill: #383a40; paint-order: stroke; stroke: rgba(255, 255, 255, 0.75); stroke-width: 4px; stroke-linejoin: round; }
.labels .end { text-anchor: end; }
.labels .start { text-anchor: start; }
.l30 { font-size: 30px; }
.l25 { font-size: 25px; }
.l20 { font-size: 21px; }
.labels .city text { font-weight: 600; fill: #222; }
.labels .faded { fill: #777; }
.labels .arabic text { font-family: "DejaVu Sans", sans-serif; font-weight: 400; font-size: 27px; }
.gulf { font: italic 400 23px "Noto Sans", sans-serif; fill: #b9d9f6; }
.city-dots circle { fill: #eee; stroke: #555; stroke-width: 2; }
.zoomer {
  position: absolute;
  top: 35px;
  right: 34px;
  width: 73px;
  height: 133px;
  padding: 14px 0 0 11px;
  border: 3px solid #111;
  border-radius: 6px;
  background: #fff;
}
.zoomer svg { width: 46px; height: 43px; margin-bottom: 10px; fill: none; stroke: #626779; stroke-width: 6; }
.zoomer .handle { stroke-width: 8; stroke-linecap: round; }
.zoomer .sign { stroke-width: 8; }

/* Annotations drawn over the application */
.current-tag { position: absolute; top: 67.500px; left: 2844px; letter-spacing: -0.200px; }
.current-box { position: absolute; top: 146px; left: 2814.500px; width: 1007px; height: 243px; border: 4.500px solid #f8472f; border-radius: 9px; }
```
